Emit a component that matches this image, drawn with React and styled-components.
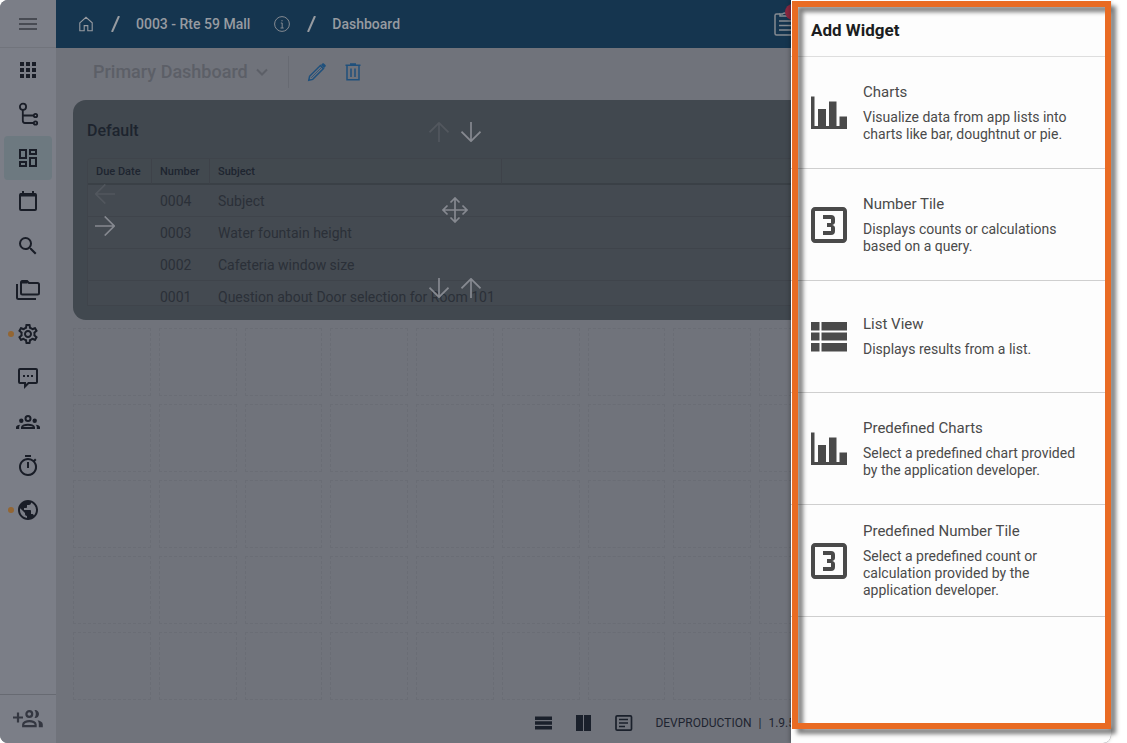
import React, { useState } from 'react';
import styled, { createGlobalStyle } from 'styled-components';
import {
  MdApps,
  MdOutlineDashboard,
  MdSearch,
  MdOutlineSettings,
  MdOutlineTimer,
  MdPublic,
  MdOutlineLooks3,
} from 'react-icons/md';

const GlobalStyle = createGlobalStyle`
  * {
    box-sizing: border-box;
  }

  body {
    margin: 0;
    background: #fff;
    font-family: Roboto, 'Liberation Sans', sans-serif;
  }

  button {
    font-family: inherit;
    border: none;
    background: transparent;
    padding: 0;
    cursor: pointer;
  }
`;

const Page = styled.div`
  min-height: 100vh;
  padding-right: 16px;
  display: flex;
`;

const Window = styled.div`
  flex: 1;
  min-width: 0;
  position: relative;
  display: flex;
  background: #70737b;
  border-radius: 8px;
`;

const Sidebar = styled.aside`
  width: 56px;
  flex-shrink: 0;
  display: flex;
  flex-direction: column;
  background: #7b7e87;
  border-radius: 8px 0 0 8px;
`;

const MenuToggle = styled.button`
  height: 48px;
  border-bottom: 1px solid #71747c;
  color: #484b53;
  display: flex;
  align-items: center;
  justify-content: center;
`;

const SideNav = styled.nav`
  flex: 1;
  display: flex;
  flex-direction: column;
  padding: 0 4px;
`;

const SideLink = styled.a`
  position: relative;
  height: 44px;
  border-radius: 4px;
  display: flex;
  align-items: center;
  justify-content: center;
  color: #191d27;
  background: ${({ $active }) => ($active ? '#6d7980' : 'transparent')};
`;

const Dot = styled.span`
  position: absolute;
  left: 4px;
  top: 19px;
  width: 6px;
  height: 6px;
  border-radius: 50%;
  background: #936633;
`;

const InviteButton = styled.button`
  height: 49px;
  border-top: 1px solid #676a72;
  color: #343741;
  display: flex;
  align-items: center;
  justify-content: center;
`;

const Content = styled.div`
  flex: 1;
  min-width: 0;
  display: flex;
  flex-direction: column;
`;

const Header = styled.header`
  height: 48px;
  padding: 0 315px 0 22px;
  display: flex;
  align-items: center;
  justify-content: space-between;
  background: #15354f;
  color: #979ba1;
`;

const Breadcrumb = styled.nav`
  display: flex;
  align-items: center;
  gap: 16px;
`;

const Crumb = styled.a`
  display: flex;
  align-items: center;
  color: inherit;
  font-size: 14px;
  font-weight: 500;
  line-height: 20px;
  text-decoration: none;
  white-space: nowrap;
`;

const InfoButton = styled.button`
  display: flex;
  margin-left: 8px;
  color: #858a91;
`;

const TaskButton = styled.button`
  position: relative;
  display: flex;
  color: #858a91;
`;

const Badge = styled.span`
  position: absolute;
  left: 11px;
  top: -8px;
  width: 16px;
  height: 16px;
  border-radius: 50%;
  background: #8a2740;
`;

const Toolbar = styled.div`
  height: 52px;
  padding: 0 17px 4px;
  display: flex;
  align-items: center;
`;

const DashboardPicker = styled.button`
  display: flex;
  align-items: center;
  gap: 8px;
  padding: 0 20px;
  height: 32px;
  border-right: 1px solid #676a72;
  color: #5c5f67;
  font-size: 18px;
  font-weight: 500;
  line-height: 20px;
`;

const ToolButton = styled.button`
  display: flex;
  margin-left: 18px;
  color: #1f507c;
`;

const Grid = styled.div`
  flex: 1;
  display: grid;
  grid-template-columns: repeat(12, 1fr);
  grid-auto-rows: 68px;
  gap: 8px;
  padding: 0 17px;
`;

const Cell = styled.div`
  border: 1px dashed #6a6d75;
`;

const Widget = styled.section`
  grid-column: 1 / 10;
  grid-row: 1 / 4;
  min-width: 0;
  position: relative;
  display: flex;
  flex-direction: column;
  padding: 0 14px 14px;
  border-radius: 13px;
  background: #41484f;
`;

const WidgetTitle = styled.h2`
  margin: 0;
  padding: 21px 0 17px;
  color: #1d242e;
  font-size: 16px;
  font-weight: 500;
  line-height: 20px;
`;

const TableClip = styled.div`
  flex: 1;
  min-height: 0;
  overflow: hidden;
  border: 1px solid #3f444b;
  border-radius: 4px 4px 0 0;
  background: #444a51;
`;

const Table = styled.table`
  width: 100%;
  table-layout: fixed;
  border-collapse: separate;
  border-spacing: 0;
  text-align: left;
`;

const Th = styled.th`
  width: ${({ $width }) => $width || 'auto'};
  height: 26px;
  padding: 2px 8px 0;
  border-right: 1px solid #3e4249;
  border-bottom: 2px solid #3a4046;
  background: #42494f;
  color: #1e2530;
  font-size: 11px;
  font-weight: 500;
  line-height: 12px;
  white-space: nowrap;
`;

const Td = styled.td`
  height: 32px;
  padding: 0 8px;
  border-bottom: 1px solid #3f444b;
  color: #2b3038;
  font-size: 14px;
  line-height: 20px;
  white-space: nowrap;
`;

const MoveLayer = styled.div`
  position: absolute;
  inset: 0;
  padding: 22px;
  display: grid;
  grid-template-columns: 1fr auto 1fr;
  color: #868990;
`;

const MoveColumn = styled.div`
  display: flex;
  flex-direction: column;
  justify-content: ${({ $spread }) => ($spread ? 'space-between' : 'center')};
  align-items: ${({ $spread }) => ($spread ? 'center' : 'flex-start')};
  gap: 12px;
`;

const ArrowPair = styled.div`
  display: flex;
  gap: 12px;
`;

const MoveButton = styled.button`
  display: flex;
  color: ${({ disabled }) => (disabled ? '#52575e' : '#868990')};
`;

const Footer = styled.footer`
  height: 43px;
  padding: 2px 316px 0 17px;
  display: flex;
  align-items: center;
  justify-content: flex-end;
  color: #1e2430;
  font-size: 12px;
  white-space: nowrap;
`;

const FooterButton = styled.button`
  display: flex;
  margin-right: 22px;
  color: #1a202b;
`;

const Separator = styled.span`
  margin: 0 7px;
`;

const Drawer = styled.aside`
  position: absolute;
  top: 0;
  right: 0;
  bottom: 0;
  width: 320px;
  background: #fdfdfd;
  border-radius: 0 0 8px 0;
  box-shadow: -1px 0 4px rgba(0, 0, 0, 0.3);
`;

const DrawerTitle = styled.h1`
  margin: 0;
  height: 57px;
  padding: 20px 20px 0;
  border-bottom: 1px solid #dedede;
  color: #1b1d21;
  font-size: 17px;
  font-weight: 700;
  line-height: 20px;
`;

const WidgetList = styled.ul`
  margin: 0;
  padding: 0;
  list-style: none;
`;

const WidgetOption = styled.button`
  width: 100%;
  height: 112px;
  padding: 0 28px 0 20px;
  display: flex;
  align-items: center;
  gap: 16px;
  border-bottom: 1px solid #cfcfcf;
  color: #4a4a4a;
  text-align: left;

  svg {
    flex-shrink: 0;
  }
`;

const OptionName = styled.span`
  display: block;
  margin-bottom: 8px;
  font-size: 15px;
  line-height: 18px;
`;

const OptionText = styled.span`
  display: block;
  font-size: 14px;
  line-height: 17px;
`;

const Highlight = styled.div`
  position: absolute;
  top: 1px;
  right: 0;
  bottom: 14px;
  left: 1px;
  border: 6px solid #e96b23;
  filter: drop-shadow(5px 5px 2px rgba(0, 0, 0, 0.5));
  pointer-events: none;
`;

const MenuIcon = () => (
  <svg width="18" height="14" viewBox="0 0 18 14" stroke="currentColor" strokeWidth="2">
    <path d="M0 2h18M0 7h18M0 12h18" />
  </svg>
);

const TreeIcon = () => (
  <svg width="24" height="24" viewBox="0 0 24 24" fill="none" stroke="currentColor" strokeWidth="1.8">
    <circle cx="7" cy="4.8" r="3.1" />
    <path d="M6.8 8v10.500c0 1.800.8 2.500 2.200 2.500h8M6.800 13.500h10.400" />
    <circle cx="19.500" cy="13.500" r="1.700" />
    <circle cx="19.500" cy="21" r="1.700" />
  </svg>
);

const CalendarIcon = () => (
  <svg width="24" height="24" viewBox="0 0 24 24" fill="none" stroke="currentColor" strokeWidth="2">
    <rect x="4" y="4" width="16" height="16" rx="1" />
    <path d="M4 5h16" strokeWidth="3" />
    <path d="M7 1v3M17 1v3" />
  </svg>
);

const FoldersIcon = () => (
  <svg width="24" height="24" viewBox="0 0 24 24" fill="none" stroke="currentColor" strokeWidth="2">
    <path d="M5 4.500V15a1.500 1.500 0 0 0 1.500 1.500h15A1.500 1.500 0 0 0 23 15V6.500A1.500 1.500 0 0 0 21.500 5H13l-2-2H6.500A1.500 1.500 0 0 0 5 4.500z" />
    <path d="M5.500 4h6" strokeWidth="3" />
    <path d="M1 6v13.500A1.500 1.500 0 0 0 2.500 21H20" />
  </svg>
);

const MessageIcon = () => (
  <svg width="24" height="24" viewBox="0 0 24 24" fill="none" stroke="currentColor" strokeWidth="2">
    <path d="M4 3h16a1 1 0 0 1 1 1v12a1 1 0 0 1-1 1h-7.500L9 20.500V17H4a1 1 0 0 1-1-1V4a1 1 0 0 1 1-1z" />
    <path d="M7 10h2M11 10h2M15 10h2" />
  </svg>
);

const GroupsIcon = () => (
  <svg width="24" height="24" viewBox="0 0 24 24" fill="none" stroke="currentColor" strokeWidth="2">
    <circle cx="12" cy="8.500" r="2.500" />
    <path d="M6 18v-.8c0-1.400 3-2.500 6-2.500s6 1.100 6 2.500v.8z" />
    <g fill="currentColor" stroke="none">
      <circle cx="5.300" cy="10.800" r="2.200" />
      <circle cx="18.700" cy="10.800" r="2.200" />
      <path d="M0 19v-1.800c0-1.600 1.900-2.500 4.300-2.500-.8.700-1.100 1.600-1.100 2.600V19zM24 19v-1.800c0-1.600-1.900-2.500-4.300-2.500.8.700 1.100 1.600 1.100 2.600V19z" />
    </g>
  </svg>
);

const InviteIcon = () => (
  <svg width="30" height="20" viewBox="0 0 30 20" fill="none" stroke="currentColor" strokeWidth="2.200">
    <path d="M5 3.500v10M0 8.500h10" />
    <circle cx="16.300" cy="5" r="2.900" />
    <path d="M10.200 17.200v-1.700c0-1.900 3.200-3.400 6.200-3.400s6.200 1.500 6.200 3.400v1.700z" />
    <path d="M21.500 1c2.500-.3 4.500 1.500 4.500 4s-2 4.300-4.500 4c1.800-2.400 1.800-5.600 0-8zM24.500 11.300c2.800.5 5.300 1.800 5.300 4.200v2.800h-4v-2.800c0-1.800-.2-2.900-1.300-4.200z" fill="currentColor" stroke="none" />
  </svg>
);

const HomeIcon = () => (
  <svg width="16" height="16" viewBox="0 0 16 16" fill="none" stroke="currentColor" strokeWidth="1.100">
    <path d="M1.800 6.800 8 1.300l6.200 5.500v8h-4.400V9.600H6.200v5.200H1.800z" />
  </svg>
);

const SlashIcon = () => (
  <svg width="10" height="16" viewBox="0 0 10 16" stroke="currentColor" strokeWidth="2">
    <path d="M9 0 2 16" />
  </svg>
);

const InfoIcon = () => (
  <svg width="16" height="16" viewBox="0 0 16 16" fill="none" stroke="currentColor">
    <circle cx="8" cy="8" r="7.400" />
    <path d="M6.800 7h1.400v5M6.500 12h3.200M8 4v1.400" />
  </svg>
);

const TaskIcon = () => (
  <svg width="22" height="24" viewBox="0 0 22 24" fill="none" stroke="currentColor" strokeWidth="1.500">
    <path d="M6 2H2.500A1.500 1.500 0 0 0 1 3.500v18A1.500 1.500 0 0 0 2.500 23h17a1.500 1.500 0 0 0 1.500-1.500v-18A1.500 1.500 0 0 0 19.500 2H16" />
    <path d="M6 4V2h2.500C9 .5 13 .5 13.500 2H16v2z" />
    <path d="M5 9h12M5 13.500h12M5 18h12" />
  </svg>
);

const ChevronIcon = () => (
  <svg width="12" height="8" viewBox="0 0 12 8" fill="none" stroke="currentColor" strokeWidth="2">
    <path d="m1 1.500 5 5 5-5" />
  </svg>
);

const PencilIcon = () => (
  <svg width="20" height="20" viewBox="0 0 20 20" fill="none" stroke="currentColor" strokeWidth="1.500">
    <path d="m1.800 18.200.8-3.900L13.400 3.500l3.100 3.100L5.700 17.400z" />
    <path d="M4.200 15.800 14.700 5.300" strokeWidth=".8" />
    <path d="m14 2.900 1.400-1.400c.5-.5 1-.5 1.500 0l1.600 1.600c.5.500.5 1 0 1.500L17.100 6z" fill="currentColor" stroke="none" />
  </svg>
);

const TrashIcon = () => (
  <svg width="16" height="18" viewBox="0 0 16 18" fill="none" stroke="currentColor" strokeWidth="1.500">
    <path d="M.5 2.200h15M5 1h6M2 2.500v14.300h12V2.500M6 5.500v8.500M10 5.500v8.500" />
  </svg>
);

const arrowTurns = { up: 0, right: 90, down: 180, left: 270 };

const ArrowIcon = ({ direction }) => (
  <svg width="20" height="20" viewBox="0 0 20 20" fill="none" stroke="currentColor" strokeWidth="1.700">
    <path d="M10 20V.8M.5 10.300 10 .8l9.500 9.500" transform={`rotate(${arrowTurns[direction]} 10 10)`} />
  </svg>
);

const MoveIcon = () => (
  <svg width="26" height="26" viewBox="0 0 26 26" fill="none" stroke="currentColor" strokeWidth="1.700">
    <path d="M13 1v24M1 13h24M8.500 5.500 13 1l4.500 4.500M8.500 20.500 13 25l4.500-4.500M5.500 8.500 1 13l4.500 4.500M20.500 8.500 25 13l-4.500 4.500" />
  </svg>
);

const RowsIcon = () => (
  <svg width="18" height="16" viewBox="0 0 18 16" fill="currentColor">
    <path d="M0 1.500h17V5H0zM0 6.300h17v3.500H0zM0 11h17v3.500H0z" />
  </svg>
);

const ColumnsIcon = () => (
  <svg width="18" height="16" viewBox="0 0 18 16" fill="currentColor">
    <path d="M1 0h7v16H1zM9 0h7v16H9z" />
  </svg>
);

const ArticleIcon = () => (
  <svg width="18" height="16" viewBox="0 0 18 16" fill="none" stroke="currentColor" strokeWidth="1.700">
    <rect x="1" y=".9" width="15.500" height="14.200" rx="1.200" />
    <path d="M4 4.500h9M4 8h9M4 11.500h6" />
  </svg>
);

const ChartIcon = () => (
  <svg width="36" height="36" viewBox="0 0 36 36" fill="currentColor">
    <path d="M0 1.500h3.500v29.500H7V14h8v17h3V6.500h7.500V31h3V21.500H36V34H0z" />
  </svg>
);

const NumberIcon = () => <MdOutlineLooks3 size={36} viewBox="3 3 18 18" />;

const ListIcon = () => (
  <svg width="36" height="36" viewBox="0 0 36 36" fill="currentColor">
    <path d="M0 3h8.500v8.500H0zM10.500 3H36v8.500H10.500zM0 13.500h8.500v8H0zM10.500 13.500H36v8H10.500zM0 24h8.500v8.500H0zM10.500 24H36v8.500H10.500z" />
  </svg>
);

const sideLinks = [
  { name: 'Apps', icon: <MdApps size={24} /> },
  { name: 'Hierarchy', icon: <TreeIcon /> },
  { name: 'Dashboards', icon: <MdOutlineDashboard size={24} />, active: true },
  { name: 'Calendar', icon: <CalendarIcon /> },
  { name: 'Search', icon: <MdSearch size={24} /> },
  { name: 'Documents', icon: <FoldersIcon /> },
  { name: 'Settings', icon: <MdOutlineSettings size={24} />, dot: true },
  { name: 'Messages', icon: <MessageIcon /> },
  { name: 'Groups', icon: <GroupsIcon /> },
  { name: 'Timer', icon: <MdOutlineTimer size={24} /> },
  { name: 'Portal', icon: <MdPublic size={24} />, dot: true },
];

const items = [
  { number: '0004', subject: 'Subject' },
  { number: '0003', subject: 'Water fountain height' },
  { number: '0002', subject: 'Cafeteria window size' },
  { number: '0001', subject: 'Question about Door selection for Room 101' },
];

const widgets = [
  {
    name: 'Charts',
    text: 'Visualize data from app lists into charts like bar, doughtnut or pie.',
    icon: <ChartIcon />,
  },
  {
    name: 'Number Tile',
    text: 'Displays counts or calculations based on a query.',
    icon: <NumberIcon />,
  },
  {
    name: 'List View',
    text: 'Displays results from a list.',
    icon: <ListIcon />,
  },
  {
    name: 'Predefined Charts',
    text: 'Select a predefined chart provided by the application developer.',
    icon: <ChartIcon />,
  },
  {
    name: 'Predefined Number Tile',
    text: 'Select a predefined count or calculation provided by the application developer.',
    icon: <NumberIcon />,
  },
];

// five free rows of twelve columns below the widget
const cells = Array.from({ length: 60 }, (_, i) => ({
  row: 4 + Math.floor(i / 12),
  column: 1 + (i % 12),
}));

const Move = ({ direction, disabled, label }) => (
  <MoveButton type="button" aria-label={label} disabled={disabled}>
    <ArrowIcon direction={direction} />
  </MoveButton>
);

const DefaultWidget = () => (
  <Widget>
    <WidgetTitle>Default</WidgetTitle>
    <TableClip>
      <Table>
        <thead>
          <tr>
            <Th $width="64px">Due Date</Th>
            <Th $width="58px">Number</Th>
            <Th $width="292px">Subject</Th>
            <Th />
          </tr>
        </thead>
        <tbody>
          {items.map((item) => (
            <tr key={item.number}>
              <Td />
              <Td>{item.number}</Td>
              <Td>{item.subject}</Td>
              <Td />
            </tr>
          ))}
        </tbody>
      </Table>
    </TableClip>
    <MoveLayer>
      <MoveColumn>
        <Move direction="left" label="Move left" disabled />
        <Move direction="right" label="Move right" />
      </MoveColumn>
      <MoveColumn $spread>
        <ArrowPair>
          <Move direction="up" label="Move up" disabled />
          <Move direction="down" label="Move down" />
        </ArrowPair>
        <MoveButton type="button" aria-label="Drag">
          <MoveIcon />
        </MoveButton>
        <ArrowPair>
          <Move direction="down" label="Increase height" />
          <Move direction="up" label="Decrease height" />
        </ArrowPair>
      </MoveColumn>
    </MoveLayer>
  </Widget>
);

const AddWidgetDrawer = ({ onSelect }) => (
  <Drawer>
    <DrawerTitle>Add Widget</DrawerTitle>
    <WidgetList>
      {widgets.map((widget) => (
        <li key={widget.name}>
          <WidgetOption type="button" onClick={() => onSelect(widget.name)}>
            {widget.icon}
            <span>
              <OptionName>{widget.name}</OptionName>
              <OptionText>{widget.text}</OptionText>
            </span>
          </WidgetOption>
        </li>
      ))}
    </WidgetList>
    <Highlight />
  </Drawer>
);

const App = () => {
  const [, setSelected] = useState(null);

  return (
    <Page>
      <GlobalStyle />
      <Window>
        <Sidebar>
          <MenuToggle type="button" aria-label="Menu">
            <MenuIcon />
          </MenuToggle>
          <SideNav>
            {sideLinks.map((link) => (
              <SideLink key={link.name} href="#" aria-label={link.name} $active={link.active}>
                {link.dot && <Dot />}
                {link.icon}
              </SideLink>
            ))}
          </SideNav>
          <InviteButton type="button" aria-label="Invite">
            <InviteIcon />
          </InviteButton>
        </Sidebar>
        <Content>
          <Header>
            <Breadcrumb>
              <Crumb href="#" aria-label="Home">
                <HomeIcon />
              </Crumb>
              <SlashIcon />
              <Crumb href="#">0003 - Rte 59 Mall</Crumb>
              <InfoButton type="button" aria-label="Info">
                <InfoIcon />
              </InfoButton>
              <SlashIcon />
              <Crumb href="#">Dashboard</Crumb>
            </Breadcrumb>
            <TaskButton type="button" aria-label="Tasks">
              <TaskIcon />
              <Badge />
            </TaskButton>
          </Header>
          <Toolbar>
            <DashboardPicker type="button">
              Primary Dashboard
              <ChevronIcon />
            </DashboardPicker>
            <ToolButton type="button" aria-label="Edit">
              <PencilIcon />
            </ToolButton>
            <ToolButton type="button" aria-label="Delete">
              <TrashIcon />
            </ToolButton>
          </Toolbar>
          <Grid>
            <DefaultWidget />
            {cells.map(({ row, column }) => (
              <Cell key={`${row}-${column}`} style={{ gridRow: row, gridColumn: column }} />
            ))}
          </Grid>
          <Footer>
            <FooterButton type="button" aria-label="Rows">
              <RowsIcon />
            </FooterButton>
            <FooterButton type="button" aria-label="Columns">
              <ColumnsIcon />
            </FooterButton>
            <FooterButton type="button" aria-label="Details">
              <ArticleIcon />
            </FooterButton>
            <span>DEVPRODUCTION</span>
            <Separator>|</Separator>
            <span>1.9.5</span>
          </Footer>
        </Content>
        <AddWidgetDrawer onSelect={setSelected} />
      </Window>
    </Page>
  );
};

export default App;
